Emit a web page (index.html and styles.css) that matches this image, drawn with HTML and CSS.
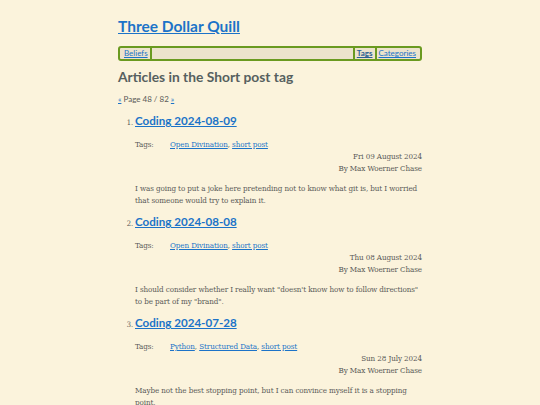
FILE: index.html
```html
<!DOCTYPE html>
<html>
<head>
<meta charset="utf-8">
<link rel="stylesheet" href="styles.css">
</head>
<body>
<div class="page">
  <header class="site-head">
    <h1 class="site-title"><a href="#">Three Dollar Quill</a></h1>
    <nav class="nav">
      <a href="#" class="nav-link">Beliefs</a>
      <span class="nav-fill"></span>
      <a href="#" class="nav-link nav-current">Tags</a>
      <a href="#" class="nav-link">Categories</a>
    </nav>
  </header>
  <main>
    <h2 class="page-title">Articles in the Short post tag</h2>
    <p class="pager"><a href="#">«</a> Page 48 / 82 <a href="#">»</a></p>
    <ol class="articles">
      <li class="article">
        <h3 class="article-title"><a href="#">Coding 2024-08-09</a></h3>
        <div class="tags"><span class="tags-label">Tags:</span><span><a href="#">Open Divination</a>, <a href="#">short post</a></span></div>
        <div class="meta">Fri 09 August 2024<br>By Max Woerner Chase</div>
        <p class="summary">I was going to put a joke here pretending not to know what git is, but I worried that someone would try to explain it.</p>
      </li>
      <li class="article">
        <h3 class="article-title"><a href="#">Coding 2024-08-08</a></h3>
        <div class="tags"><span class="tags-label">Tags:</span><span><a href="#">Open Divination</a>, <a href="#">short post</a></span></div>
        <div class="meta">Thu 08 August 2024<br>By Max Woerner Chase</div>
        <p class="summary">I should consider whether I really want "doesn't know how to follow directions" to be part of my "brand".</p>
      </li>
      <li class="article">
        <h3 class="article-title"><a href="#">Coding 2024-07-28</a></h3>
        <div class="tags"><span class="tags-label">Tags:</span><span><a href="#">Python</a>, <a href="#">Structured Data</a>, <a href="#">short post</a></span></div>
        <div class="meta">Sun 28 July 2024<br>By Max Woerner Chase</div>
        <p class="summary">Maybe not the best stopping point, but I can convince myself it is a stopping point.</p>
      </li>
    </ol>
  </main>
</div>
</body>
</html>
```

FILE: styles.css
```css
html, body {
  margin: 0;
  padding: 0;
  background: #fbf3dc;
}
body {
  font-family: "DejaVu Serif Condensed", "DejaVu Serif", serif;
  font-size: 8px;
  letter-spacing: -0.1px;
  color: #5a5a58;
}
a {
  color: #1c73c8;
}
.page {
  width: 304px;
  margin: 0 auto;
  padding-top: 14px;
}
.site-title {
  font-family: Lato, "Open Sans", sans-serif;
  font-size: 15.5px;
  font-weight: 700;
  letter-spacing: 0;
  margin: 0 0 8px 0;
  line-height: 24px;
}
.nav {
  display: flex;
  align-items: center;
  border: 2px solid #6a9a20;
  border-radius: 3px;
  background: #ece3cc;
  font-family: Lato, "Open Sans", sans-serif;
  font-size: 8px;
  letter-spacing: 0;
  height: 11px;
  padding: 0 2px;
}
.nav-link {
  padding: 0 2px;
  line-height: 11px;
}
.nav-fill {
  flex: 1;
  align-self: stretch;
  border-left: 2px solid #6a9a20;
  border-right: 2px solid #6a9a20;
}
.nav-current {
  font-weight: 700;
  color: #2a5f93;
  border-right: 2px solid #6a9a20;
}
.page-title {
  font-family: Lato, "Open Sans", sans-serif;
  font-size: 13.8px;
  font-weight: 700;
  letter-spacing: 0;
  color: #56605f;
  margin: 7px 0 9px 0;
}
.pager {
  font-family: Lato, "Open Sans", sans-serif;
  font-size: 8px;
  letter-spacing: 0;
  margin: 0 0 9px 0;
}
.articles {
  margin: 0;
  padding-left: 17px;
}
.article {
  margin-bottom: 7px;
}
.article::marker {
  font-size: 7.5px;
}
.article-title {
  font-family: Lato, "Open Sans", sans-serif;
  font-size: 11.6px;
  line-height: 16px;
  font-weight: 700;
  letter-spacing: 0;
  margin: 0 0 10px 0;
}
.tags {
  display: flex;
  line-height: 12px;
}
.tags-label {
  width: 35px;
}
.meta {
  text-align: right;
  line-height: 12px;
}
.summary {
  line-height: 12px;
  margin: 8px 0 0 0;
}
```
